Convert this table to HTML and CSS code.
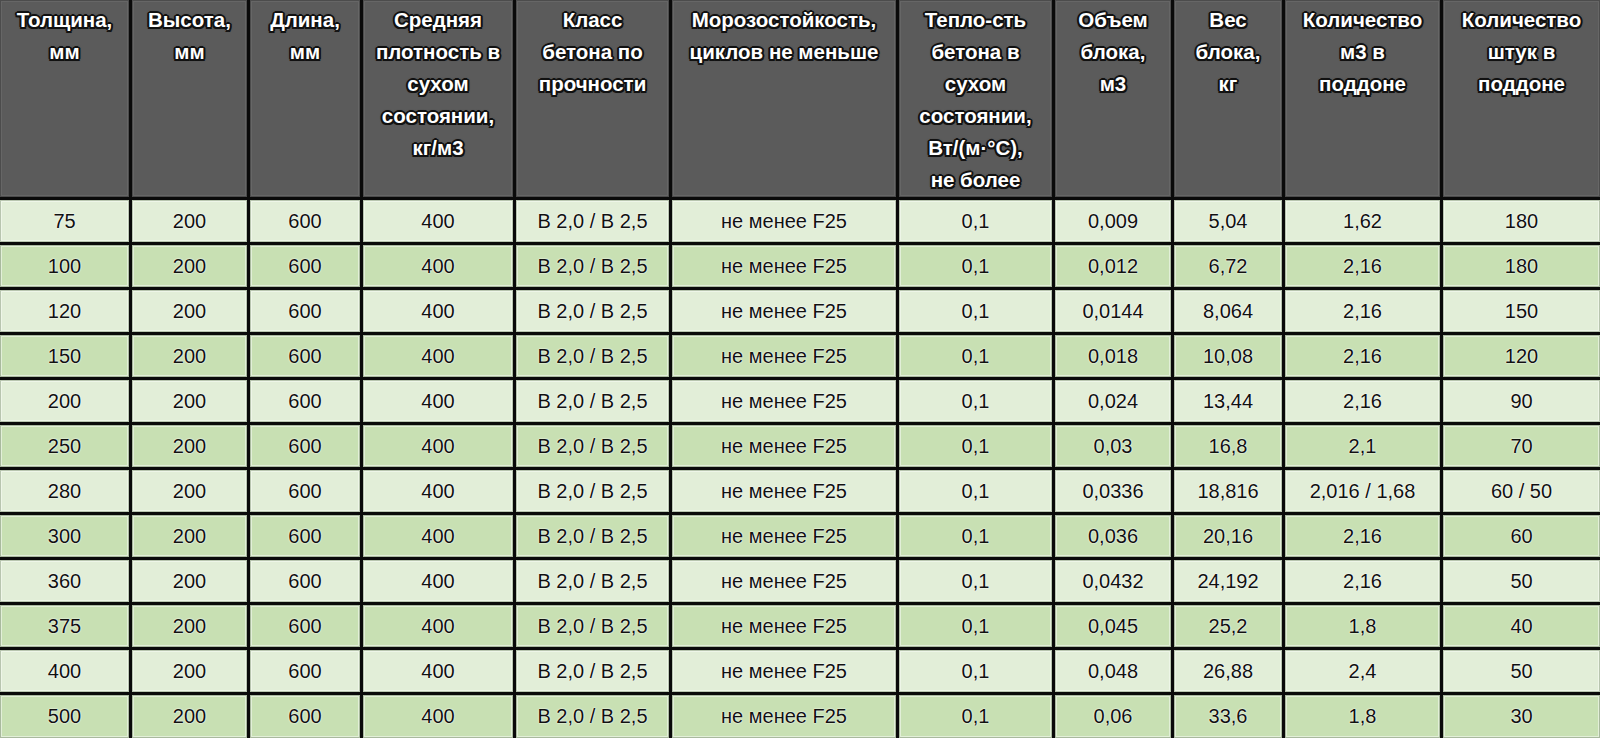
FILE: index.html
```html
<!DOCTYPE html>
<html lang="ru">
<head>
<meta charset="utf-8">
<title>Газобетонные блоки</title>
<link rel="stylesheet" href="styles.css">
</head>
<body>
<div class="grid">
  <div class="h">Толщина,<br>мм</div>
  <div class="h">Высота,<br>мм</div>
  <div class="h">Длина,<br>мм</div>
  <div class="h">Средняя<br>плотность в<br>сухом<br>состоянии,<br>кг/м3</div>
  <div class="h">Класс<br>бетона по<br>прочности</div>
  <div class="h">Морозостойкость,<br>циклов не меньше</div>
  <div class="h">Тепло-сть<br>бетона в<br>сухом<br>состоянии,<br>Вт/(м·°С),<br>не более</div>
  <div class="h">Объем<br>блока,<br>м3</div>
  <div class="h">Вес<br>блока,<br>кг</div>
  <div class="h">Количество<br>м3 в<br>поддоне</div>
  <div class="h">Количество<br>штук в<br>поддоне</div>

  <div class="c a">75</div><div class="c a">200</div><div class="c a">600</div><div class="c a">400</div><div class="c a">В 2,0 / В 2,5</div><div class="c a">не менее F25</div><div class="c a">0,1</div><div class="c a">0,009</div><div class="c a">5,04</div><div class="c a">1,62</div><div class="c a">180</div>
  <div class="c b">100</div><div class="c b">200</div><div class="c b">600</div><div class="c b">400</div><div class="c b">В 2,0 / В 2,5</div><div class="c b">не менее F25</div><div class="c b">0,1</div><div class="c b">0,012</div><div class="c b">6,72</div><div class="c b">2,16</div><div class="c b">180</div>
  <div class="c a">120</div><div class="c a">200</div><div class="c a">600</div><div class="c a">400</div><div class="c a">В 2,0 / В 2,5</div><div class="c a">не менее F25</div><div class="c a">0,1</div><div class="c a">0,0144</div><div class="c a">8,064</div><div class="c a">2,16</div><div class="c a">150</div>
  <div class="c b">150</div><div class="c b">200</div><div class="c b">600</div><div class="c b">400</div><div class="c b">В 2,0 / В 2,5</div><div class="c b">не менее F25</div><div class="c b">0,1</div><div class="c b">0,018</div><div class="c b">10,08</div><div class="c b">2,16</div><div class="c b">120</div>
  <div class="c a">200</div><div class="c a">200</div><div class="c a">600</div><div class="c a">400</div><div class="c a">В 2,0 / В 2,5</div><div class="c a">не менее F25</div><div class="c a">0,1</div><div class="c a">0,024</div><div class="c a">13,44</div><div class="c a">2,16</div><div class="c a">90</div>
  <div class="c b">250</div><div class="c b">200</div><div class="c b">600</div><div class="c b">400</div><div class="c b">В 2,0 / В 2,5</div><div class="c b">не менее F25</div><div class="c b">0,1</div><div class="c b">0,03</div><div class="c b">16,8</div><div class="c b">2,1</div><div class="c b">70</div>
  <div class="c a">280</div><div class="c a">200</div><div class="c a">600</div><div class="c a">400</div><div class="c a">В 2,0 / В 2,5</div><div class="c a">не менее F25</div><div class="c a">0,1</div><div class="c a">0,0336</div><div class="c a">18,816</div><div class="c a">2,016 / 1,68</div><div class="c a">60 / 50</div>
  <div class="c b">300</div><div class="c b">200</div><div class="c b">600</div><div class="c b">400</div><div class="c b">В 2,0 / В 2,5</div><div class="c b">не менее F25</div><div class="c b">0,1</div><div class="c b">0,036</div><div class="c b">20,16</div><div class="c b">2,16</div><div class="c b">60</div>
  <div class="c a">360</div><div class="c a">200</div><div class="c a">600</div><div class="c a">400</div><div class="c a">В 2,0 / В 2,5</div><div class="c a">не менее F25</div><div class="c a">0,1</div><div class="c a">0,0432</div><div class="c a">24,192</div><div class="c a">2,16</div><div class="c a">50</div>
  <div class="c b">375</div><div class="c b">200</div><div class="c b">600</div><div class="c b">400</div><div class="c b">В 2,0 / В 2,5</div><div class="c b">не менее F25</div><div class="c b">0,1</div><div class="c b">0,045</div><div class="c b">25,2</div><div class="c b">1,8</div><div class="c b">40</div>
  <div class="c a">400</div><div class="c a">200</div><div class="c a">600</div><div class="c a">400</div><div class="c a">В 2,0 / В 2,5</div><div class="c a">не менее F25</div><div class="c a">0,1</div><div class="c a">0,048</div><div class="c a">26,88</div><div class="c a">2,4</div><div class="c a">50</div>
  <div class="c b">500</div><div class="c b">200</div><div class="c b">600</div><div class="c b">400</div><div class="c b">В 2,0 / В 2,5</div><div class="c b">не менее F25</div><div class="c b">0,1</div><div class="c b">0,06</div><div class="c b">33,6</div><div class="c b">1,8</div><div class="c b">30</div>
</div>
</body>
</html>
```

FILE: styles.css
```css
html, body {
  margin: 0;
  padding: 0;
  background: #000;
  overflow: hidden;
}
.grid {
  display: grid;
  grid-template-columns: 129px 115px 110px 150px 153px 224px 153px 116px 108px 155px 157px;
  grid-template-rows: 197px repeat(11, 42px) 43px;
  gap: 3px;
  width: 1600px;
  background: #0a0a0a;
  font-family: "Liberation Sans", Arial, sans-serif;
}
.h {
  background: #5b5b5b;
  box-shadow: inset 0 0 0 1px #4c4c4c, inset 0 0 0 2px #666;
  color: #fff;
  font-weight: bold;
  font-size: 20.5px;
  line-height: 32px;
  padding-top: 4px;
  text-align: center;
  white-space: nowrap;
  text-shadow:
    -1.5px -1.5px 0 #111, 1.5px -1.5px 0 #111, -1.5px 1.5px 0 #111, 1.5px 1.5px 0 #111,
    0 -2px 0 #111, 0 2px 0 #111, -2px 0 0 #111, 2px 0 0 #111,
    0 0 3px #000;
}
.c {
  display: flex;
  align-items: center;
  justify-content: center;
  font-size: 20px;
  color: #111;
  white-space: nowrap;
  text-shadow: 0 0 2px #fff, 0 0 1px #fff;
}
.a {
  background: #e2eed8;
  box-shadow: inset 0 0 0 1px #b8c5af, inset 0 0 0 2px #eef6e8;
}
.b {
  background: #c8e0b3;
  box-shadow: inset 0 0 0 1px #a9b99e, inset 0 0 0 2px #e2efd8;
}
```
